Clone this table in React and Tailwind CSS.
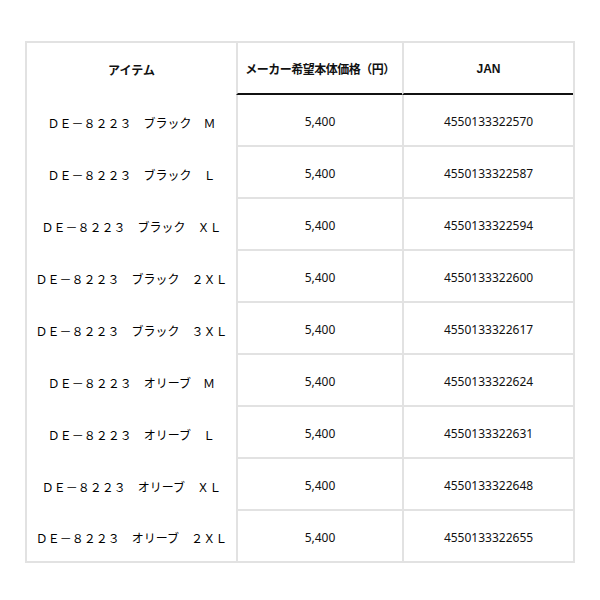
import React from 'react';

const rows = [
  ['ＤＥ－８２２３　ブラック　Ｍ', '4550133322570'],
  ['ＤＥ－８２２３　ブラック　Ｌ', '4550133322587'],
  ['ＤＥ－８２２３　ブラック　ＸＬ', '4550133322594'],
  ['ＤＥ－８２２３　ブラック　２ＸＬ', '4550133322600'],
  ['ＤＥ－８２２３　ブラック　３ＸＬ', '4550133322617'],
  ['ＤＥ－８２２３　オリーブ　Ｍ', '4550133322624'],
  ['ＤＥ－８２２３　オリーブ　Ｌ', '4550133322631'],
  ['ＤＥ－８２２３　オリーブ　ＸＬ', '4550133322648'],
  ['ＤＥ－８２２３　オリーブ　２ＸＬ', '4550133322655'],
];

const App = () => {
  return (
    <div className="w-[600px] h-[600px] bg-white pt-[41px] pl-[25px] text-[12px] text-[#111] font-['Noto_Sans','Noto_Sans_CJK_JP',sans-serif]">
      <div className="w-[550px] border-2 border-[#e2e2e2] grid grid-cols-[209px_166px_171px]">
        <div className="h-[52px] pt-[2px] flex items-center justify-center font-bold font-['Noto_Sans_CJK_JP',sans-serif]">
          アイテム
        </div>
        <div className="h-[52px] pt-[2px] flex items-center justify-center border-l-2 border-[#e2e2e2] border-b-2 border-b-[#111] font-bold font-['Noto_Sans_CJK_JP',sans-serif] tracking-[-0.5px]">
          メーカー希望本体価格（円）
        </div>
        <div className="h-[52px] pt-[2px] flex items-center justify-center border-l-2 border-[#e2e2e2] border-b-2 border-b-[#111] font-bold font-['Liberation_Sans',sans-serif]">
          JAN
        </div>
        {rows.map(([name, jan], i) => {
          const last = i === rows.length - 1;
          return (
            <React.Fragment key={jan}>
              <div className={`pt-[3px] flex items-center justify-center text-black font-['Noto_Sans_CJK_JP',sans-serif] ${last ? 'h-[50px]' : 'h-[52px]'}`}>
                {name}
              </div>
              <div className={`pt-[3px] flex items-center justify-center border-l-2 border-[#e2e2e2] ${last ? 'h-[50px]' : 'h-[52px] border-b-2'}`}>
                5,400
              </div>
              <div className={`pt-[3px] flex items-center justify-center border-l-2 border-[#e2e2e2] ${last ? 'h-[50px]' : 'h-[52px] border-b-2'}`}>
                {jan}
              </div>
            </React.Fragment>
          );
        })}
      </div>
    </div>
  );
};

export default App;
